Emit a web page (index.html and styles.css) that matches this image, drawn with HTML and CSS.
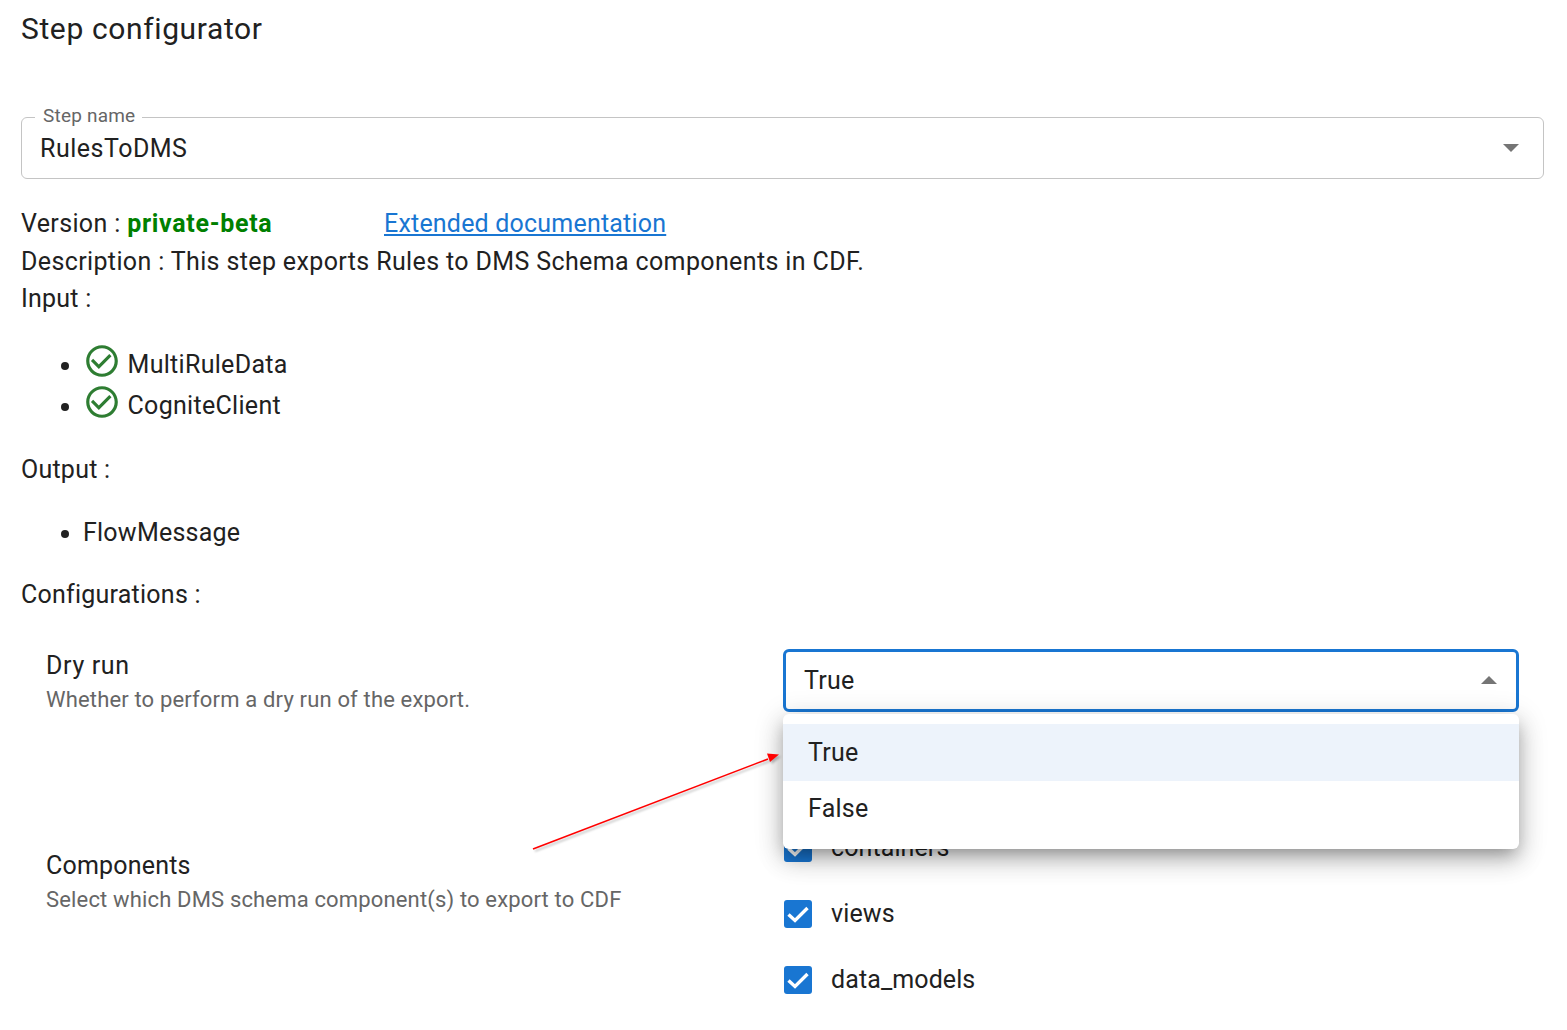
FILE: index.html
```html
<!DOCTYPE html>
<html lang="en">
<head>
    <meta charset="UTF-8">
    <meta name="viewport" content="width=device-width, initial-scale=1.0">
    <title>Step configurator</title>
    <link rel="stylesheet" href="styles.css">
</head>
<body>
    <div class="page">
        <h2 class="title">Step configurator</h2>

        <div class="field">
            <span class="field-label">Step name</span>
            <span class="field-value">RulesToDMS</span>
            <span class="caret"></span>
        </div>

        <div class="info">
            <div class="info-line version-line">Version : <b class="version">private-beta</b> <a class="doc-link" href="#">Extended documentation</a></div>
            <div class="info-line description">Description : This step exports Rules to DMS Schema components in CDF.</div>
            <div class="info-line">Input :</div>
        </div>

        <ul class="io-list input-list">
            <li>
                <svg class="ok-icon" viewBox="0 0 24 24"><path d="M16.59 7.58 10 14.17l-3.59-3.58L5 12l5 5 8-8zM12 2C6.48 2 2 6.48 2 12s4.48 10 10 10 10-4.48 10-10S17.52 2 12 2zm0 18c-4.42 0-8-3.58-8-8s3.58-8 8-8 8 3.58 8 8-3.58 8-8 8z"/></svg>
                MultiRuleData
            </li>
            <li>
                <svg class="ok-icon" viewBox="0 0 24 24"><path d="M16.59 7.58 10 14.17l-3.59-3.58L5 12l5 5 8-8zM12 2C6.48 2 2 6.48 2 12s4.48 10 10 10 10-4.48 10-10S17.52 2 12 2zm0 18c-4.42 0-8-3.58-8-8s3.58-8 8-8 8 3.58 8 8-3.58 8-8 8z"/></svg>
                CogniteClient
            </li>
        </ul>

        <div class="info-line">Output :</div>
        <ul class="io-list output-list">
            <li>FlowMessage</li>
        </ul>

        <div class="info-line">Configurations :</div>

        <div class="config-row dry-run">
            <div class="config-text">
                <div class="config-name">Dry run</div>
                <div class="config-desc">Whether to perform a dry run of the export.</div>
            </div>
            <div class="select-box">
                <span>True</span>
                <span class="caret caret-up"></span>
            </div>
        </div>

        <div class="config-row components">
            <div class="config-text">
                <div class="config-name">Components</div>
                <div class="config-desc">Select which DMS schema component(s) to export to CDF</div>
            </div>
            <div class="checks">
                <label class="check"><svg class="check-box" viewBox="0 0 28 28"><path d="M4.5 14.5l6.5 6L23.5 8"/></svg>containers</label>
                <label class="check"><svg class="check-box" viewBox="0 0 28 28"><path d="M4.5 14.5l6.5 6L23.5 8"/></svg>views</label>
                <label class="check"><svg class="check-box" viewBox="0 0 28 28"><path d="M4.5 14.5l6.5 6L23.5 8"/></svg>data_models</label>
            </div>
        </div>
    </div>

    <!-- open dropdown, sits over the checkboxes -->
    <div class="menu">
        <div class="menu-item selected">True</div>
        <div class="menu-item">False</div>
    </div>

    <!-- red annotation arrow -->
    <svg class="arrow" width="1567" height="1030" viewBox="0 0 1567 1030">
        <line x1="533" y1="849" x2="768" y2="759" stroke="#f00" stroke-width="1.6"/>
        <polygon points="779,754.5 767,753.5 770,762" fill="#f00"/>
    </svg>
</body>
</html>
```

FILE: styles.css
```css
* {
    box-sizing: border-box;
}

body {
    margin: 0;
    background-color: #fff;
    color: #212121;
    font-family: Roboto, "Liberation Sans", sans-serif;
    font-size: 25px;
    letter-spacing: 0.00938em;
    overflow: hidden;
}

.page {
    padding: 0 23px 0 21px;
    height: 1030px;
}

.title {
    margin: 0;
    padding-top: 9px;
    height: 117px;
    font-size: 30px;
    line-height: 40px;
    font-weight: 400;
    letter-spacing: 0.62px;
}

/* Step name select */
.field {
    position: relative;
    display: flex;
    align-items: center;
    justify-content: space-between;
    height: 62px;
    padding: 0 24px 0 18px;
    border: 1px solid #c4c4c4;
    border-radius: 6px;
    letter-spacing: 0.5px;
}

.field-label {
    position: absolute;
    top: -14px;
    left: 13px;
    padding: 0 7px 0 8px;
    background-color: #fff;
    color: #666;
    font-size: 19px;
    line-height: 24px;
    letter-spacing: 0.2px;
}

.caret {
    width: 0;
    height: 0;
    border-left: 8px solid transparent;
    border-right: 8px solid transparent;
    border-top: 8px solid #757575;
}

.caret-up {
    border-top: 0;
    border-bottom: 8px solid #757575;
}

.info {
    margin-top: 26px;
}

.info-line {
    height: 37.5px;
    line-height: 37.5px;
}

.version-line {
    letter-spacing: 0.35px;
}

.description {
    letter-spacing: 0.37px;
}

.version {
    color: #008000;
    font-weight: 700;
    letter-spacing: 0.7px;
}

.doc-link {
    margin-left: 105px;
    color: #1976d2;
    letter-spacing: 0.2px;
}

.io-list {
    margin: 0;
    padding-left: 62px;
}

.io-list li {
    height: 41px;
    line-height: 41px;
}

.input-list {
    margin-top: 24px;
    margin-bottom: 27px;
    letter-spacing: 0.3px;
}

.output-list {
    margin-top: 24px;
    margin-bottom: 23px;
}

.ok-icon {
    width: 38px;
    height: 38px;
    fill: #2e7d32;
    vertical-align: -7px;
}

/* Configuration rows */
.config-row {
    display: grid;
    grid-template-columns: 737px 736px;
    padding-left: 25px;
}

.dry-run {
    margin-top: 35px;
    height: 200px;
}

.config-name {
    line-height: 34px;
}

.dry-run .config-name {
    letter-spacing: 0.65px;
}

.components .config-name {
    letter-spacing: 0.2px;
}

.config-desc {
    color: #666;
    font-size: 22px;
    line-height: 34px;
    letter-spacing: 0.16px;
}

.select-box {
    display: flex;
    align-items: center;
    justify-content: space-between;
    height: 63px;
    padding: 0 19px 0 18px;
    border: 3px solid #1976d2;
    border-radius: 6px;
}

.checks {
    display: flex;
    flex-direction: column;
    gap: 32px;
    margin-top: -18px;
    letter-spacing: 0.1px;
}

.check {
    display: flex;
    align-items: center;
    gap: 19px;
    height: 34px;
    padding-left: 1px;
}

.check-box {
    width: 28px;
    height: 28px;
    border-radius: 3px;
    background-color: #1976d2;
    fill: none;
    stroke: #fff;
    stroke-width: 3.4;
}

/* Dropdown menu */
.menu {
    position: absolute;
    top: 714px;
    left: 783px;
    width: 736px;
    height: 135px;
    padding: 10px 0;
    border-radius: 6px;
    background-color: #fff;
    box-shadow: 0 8px 16px -5px rgba(0, 0, 0, 0.3), 0 12px 24px 2px rgba(0, 0, 0, 0.14), 0 5px 28px 4px rgba(0, 0, 0, 0.12);
}

.menu-item {
    height: 56.5px;
    padding-left: 25px;
    line-height: 56.5px;
}

.selected {
    background-color: #edf3fb;
    line-height: 58px;
}

.arrow {
    position: absolute;
    top: 0;
    left: 0;
    pointer-events: none;
    filter: drop-shadow(2px 2px 1px rgba(0, 0, 0, 0.25));
}
```
